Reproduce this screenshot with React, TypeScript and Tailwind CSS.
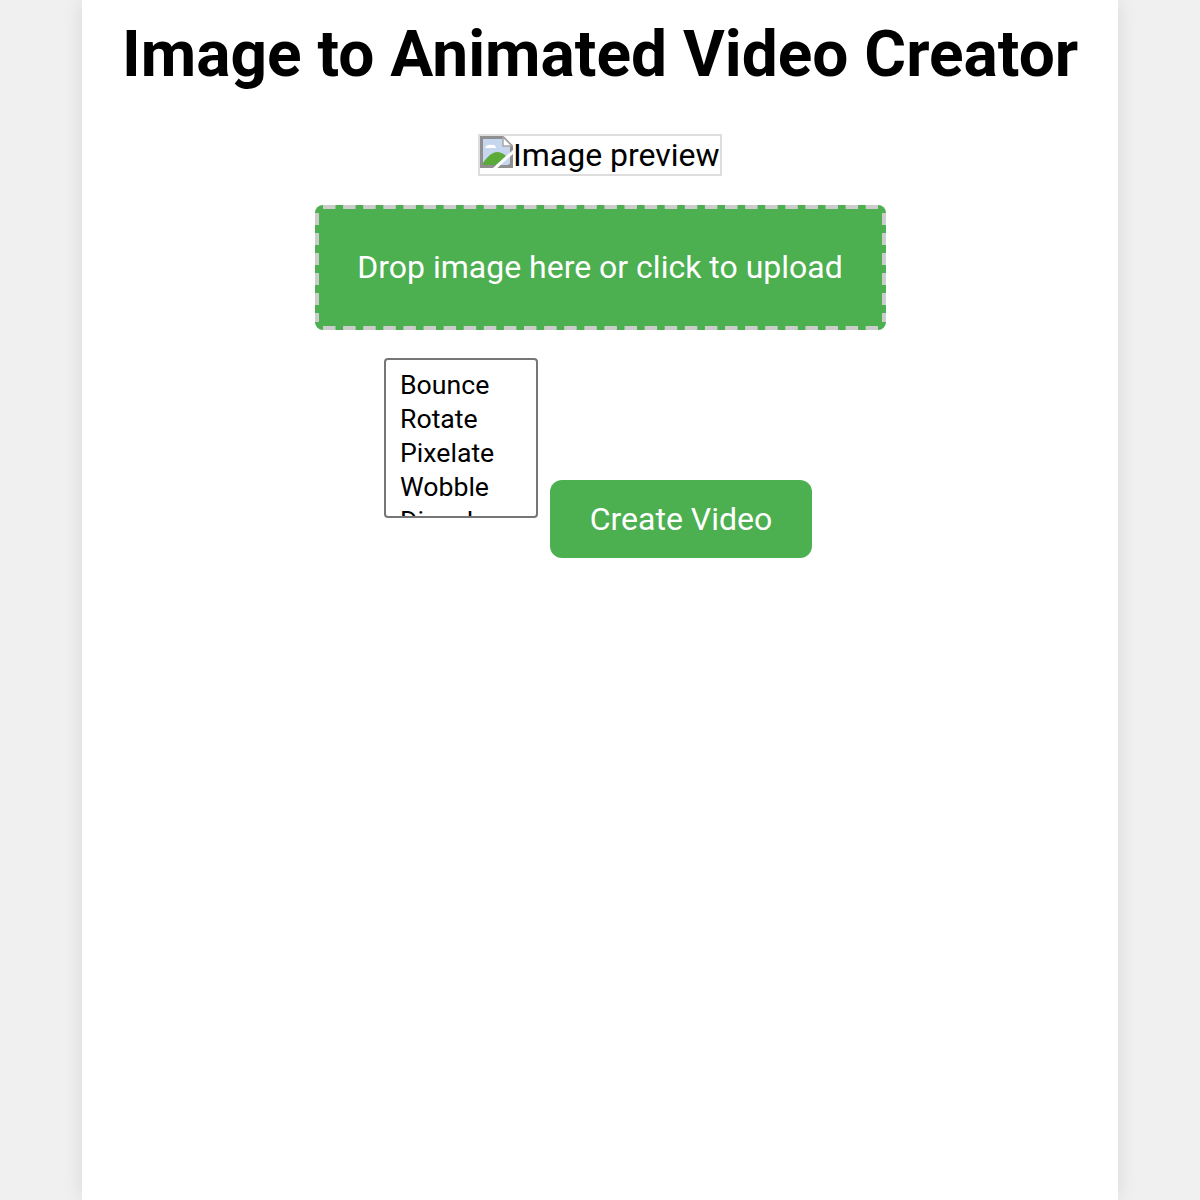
const EFFECTS = ["Bounce", "Rotate", "Pixelate", "Wobble", "Dissolve"];

function BrokenImageIcon() {
  return (
    <svg width="33" height="32" viewBox="0 0 33 32" className="shrink-0">
      <path d="M1.5 1.5H23L31.5 10V30.5H1.5Z" fill="#c6d6ee" stroke="#8f8f8f" strokeWidth="3" />
      <path d="M23 1V10H32Z" fill="#fff" stroke="#a8a8a8" strokeWidth="1.5" />
      <path d="M5 12c1-3 4-4 6-3 2-1 5 0 5 3Z" fill="#fff" />
      <path d="M3 29V27C7 21 12 16 17 16c3 0 6 1 9 4L16 29Z" fill="#5cab3a" />
      <path d="M14 33 34 15" stroke="#fff" strokeWidth="3" />
      <path d="M25 32 33 24.5V32Z" fill="#8f8f8f" />
    </svg>
  );
}

export default function App() {
  return (
    <div className="min-h-[1200px] bg-[#f0f0f0] px-[82px] font-['Roboto',sans-serif]">
      <div className="h-[1200px] bg-white px-10 shadow-[0_0_20px_rgba(0,0,0,0.1)] overflow-hidden">
        <h1 className="pt-[17px] text-center text-[64px] leading-[75px] font-bold text-black whitespace-nowrap">
          Image to Animated Video Creator
        </h1>

        <div className="mt-[42px] flex justify-center">
          <div className="flex h-[42px] w-[244px] items-start border-2 border-[#ddd] text-[32px] leading-[38px] text-black whitespace-nowrap">
            <BrokenImageIcon />
            <span>Image preview</span>
          </div>
        </div>

        <div className="mt-[28.5px] flex justify-center">
          <div className="relative flex h-[125px] w-[571px] items-center justify-center rounded-lg bg-[#4caf50] text-[32px] text-white whitespace-nowrap">
            Drop image here or click to upload
            <svg className="absolute inset-0" width="571" height="125" fill="none" stroke="#ccc" strokeWidth="4">
              <path d="M8 2H563M8 123H563" strokeDasharray="12.5 7.6" />
              <path d="M2 8V117M569 8V117" strokeDasharray="12 8" />
            </svg>
          </div>
        </div>

        <div className="mt-[28.5px] flex items-start justify-center gap-3 pr-1">
          <select
            size={4}
            className="h-[160px] w-[154px] overflow-hidden rounded border-2 border-[#767676] bg-white px-3 pt-[9px] text-[26.67px] text-black outline-none [scrollbar-width:none]"
          >
            {EFFECTS.map((name) => (
              <option key={name} className="min-h-0 px-[2px] pt-0 pb-[2px]">
                {name}
              </option>
            ))}
          </select>
          <button className="mt-[122px] h-[78px] w-[262px] rounded-xl bg-[#4caf50] text-[32px] text-white">
            Create Video
          </button>
        </div>
      </div>
    </div>
  );
}
